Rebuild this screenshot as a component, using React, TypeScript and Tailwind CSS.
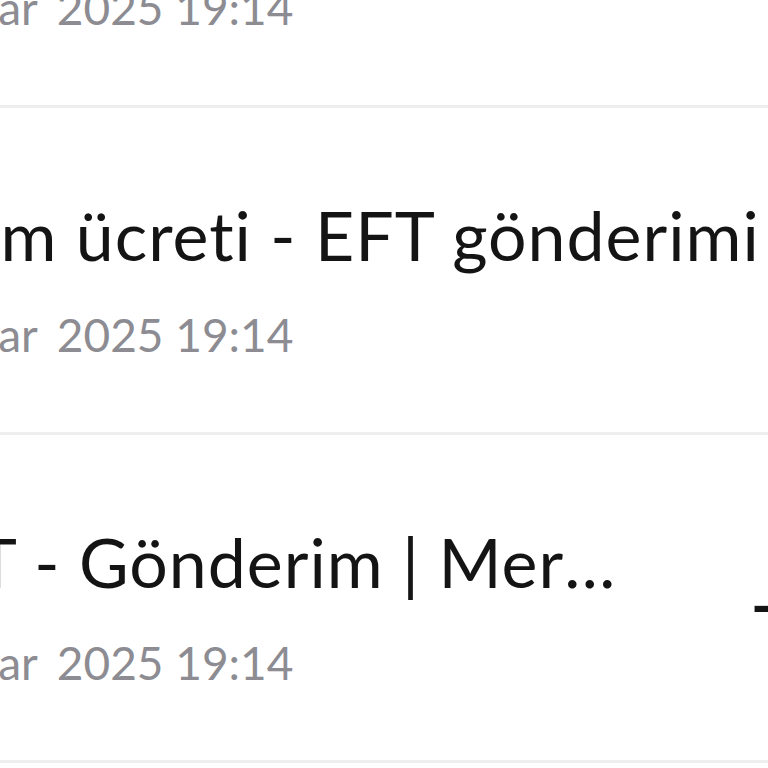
import React from 'react';

type Txn = {
  title: string;
  day: string;
  time: string;
  amount: string;
};

const transactions: Txn[] = [
  { title: 'EFT - Gönderim | Mehmet Yılmaz', day: '17 Mar', time: '2025 19:14', amount: '-₺250,00' },
  { title: 'İşlem ücreti - EFT gönderimi', day: '17 Mar', time: '2025 19:14', amount: '-₺6,00' },
  { title: 'EFT - Gönderim | Mert Kaya Aksoy', day: '17 Mar', time: '2025 19:14', amount: '-₺12.500,00' },
];

function TxnRow({ txn }: { txn: Txn }) {
  return (
    <div className="flex items-center border-b-[3px] border-[#eeeeef] pt-[86px] pb-[74px]">
      <div className="flex-1 min-w-0">
        <p className="text-[68px] leading-[1.2] tracking-[1px] text-[#141414] truncate">{txn.title}</p>
        <div className="mt-[37px] -ml-[6px] flex gap-[19px] text-[46px] leading-none text-[#8c8c92]">
          <span>{txn.day}</span>
          <span>{txn.time}</span>
        </div>
      </div>
      <span className="ml-[122px] shrink-0 text-[68px] leading-none font-semibold text-[#141414]">
        {txn.amount}
      </span>
    </div>
  );
}

export default function App() {
  return (
    <div className="w-[768px] h-[768px] overflow-hidden bg-white font-['Lato',sans-serif]">
      <div className="-mt-[220px] -ml-[103px] w-[1226px]">
        {transactions.map((t, i) => (
          <TxnRow key={i} txn={t} />
        ))}
      </div>
    </div>
  );
}
